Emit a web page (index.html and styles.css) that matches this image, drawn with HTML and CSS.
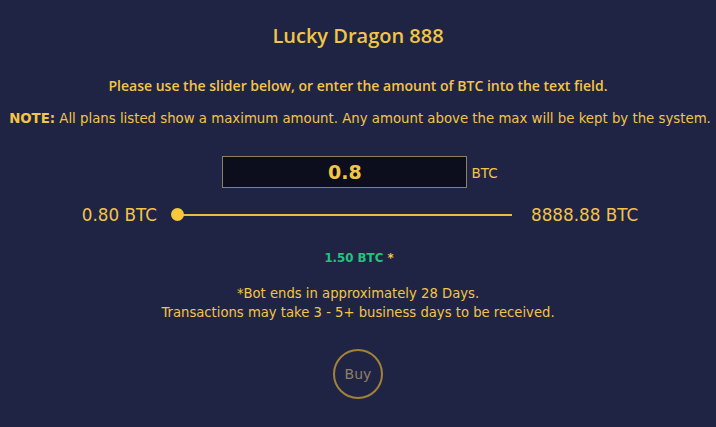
FILE: index.html
```html
<!DOCTYPE html>
<html>
<head>
<meta charset="utf-8">
<link rel="stylesheet" href="styles.css">
</head>
<body>
<main class="page">
  <h1 class="title">Lucky Dragon 888</h1>
  <p class="intro">Please use the slider below, or enter the amount of BTC into the text field.</p>
  <p class="note"><strong>NOTE:</strong> All plans listed show a maximum amount. Any amount above the max will be kept by the system.</p>
  <div class="amount-row">
    <div class="amount-box">0.8</div>
    <span class="unit">BTC</span>
  </div>
  <div class="slider-row">
    <span class="range-label">0.80 BTC</span>
    <div class="slider"><span class="thumb"></span></div>
    <span class="range-label">8888.88 BTC</span>
  </div>
  <p class="profit"><span class="green">1.50 BTC</span> *</p>
  <p class="info">*Bot ends in approximately 28 Days.<br>Transactions may take 3 - 5+ business days to be received.</p>
  <button class="buy">Buy</button>
</main>
</body>
</html>
```
FILE: styles.css
```css
html, body {
  margin: 0;
  padding: 0;
  background: #1f2444;
}
.page {
  display: flex;
  flex-direction: column;
  align-items: center;
  color: #f3c546;
  font-family: "Open Sans", sans-serif;
  padding-top: 22px;
}
.title {
  margin: 0;
  font-size: 20px;
  font-weight: 600;
  line-height: 27px;
}
.intro {
  margin: 27px 0 0;
  font-size: 14px;
  font-weight: 600;
  line-height: 20px;
}
.note {
  margin: 13px 0 0;
  font-family: "DejaVu Sans", sans-serif;
  font-size: 13.3px;
  line-height: 20px;
  white-space: nowrap;
  padding-left: 4px;
}
.note strong {
  font-weight: 700;
}
.amount-row {
  display: flex;
  align-items: center;
  margin-top: 27px;
  gap: 4px;
  padding-left: 4px;
}
.amount-box {
  width: 243px;
  height: 30px;
  border: 1px solid #8c8161;
  background: #0c0e1d;
  display: flex;
  align-items: center;
  justify-content: center;
  font-family: "DejaVu Sans", sans-serif;
  font-weight: 700;
  font-size: 19px;
}
.unit {
  font-family: "DejaVu Sans", sans-serif;
  font-size: 13.5px;
  margin-top: 2px;
}
.slider-row {
  display: flex;
  align-items: center;
  margin-top: 17px;
  padding-left: 4px;
}
.range-label {
  font-family: "DejaVu Sans", sans-serif;
  font-size: 16.8px;
}
.slider {
  position: relative;
  width: 335px;
  height: 2px;
  background: #e8bd45;
  margin: 0 19px 0 20px;
}
.thumb {
  position: absolute;
  left: -6px;
  top: -6px;
  width: 13px;
  height: 13px;
  border-radius: 50%;
  background: #f7c93a;
}
.profit {
  margin: 25px 0 0;
  font-family: "DejaVu Sans", sans-serif;
  font-size: 11.8px;
  font-weight: 700;
  line-height: 16px;
  padding-left: 2px;
}
.green {
  color: #22c47e;
}
.info {
  margin: 18px 0 0;
  font-family: "DejaVu Sans", sans-serif;
  font-size: 13.2px;
  line-height: 19px;
  text-align: center;
}
.buy {
  margin-top: 27px;
  width: 50px;
  height: 50px;
  border-radius: 50%;
  border: 2px solid #a3813a;
  background: transparent;
  color: #8f8062;
  font-family: "DejaVu Sans", sans-serif;
  font-size: 14px;
  padding: 0;
}
```
